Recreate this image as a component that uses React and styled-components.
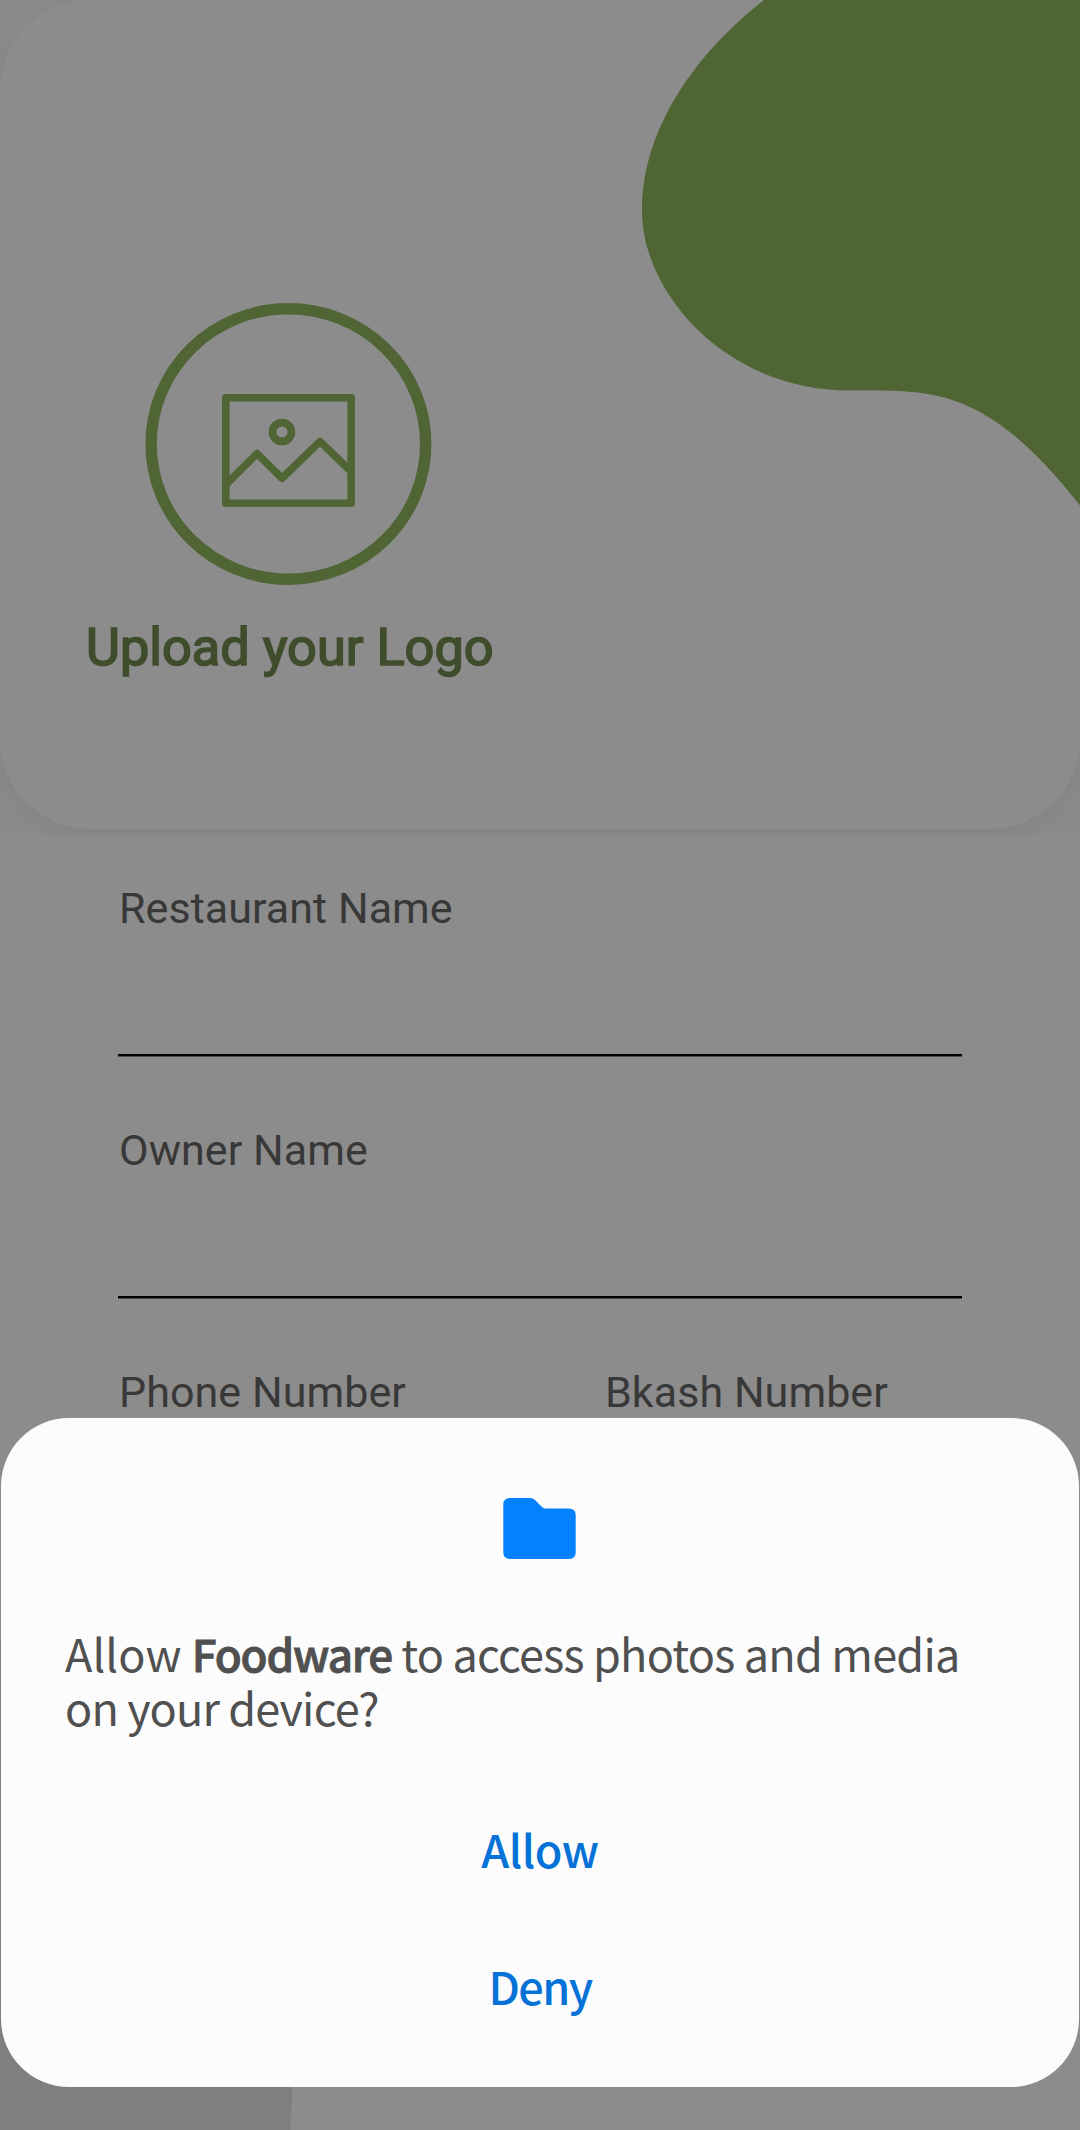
import React from 'react';
import styled, { createGlobalStyle } from 'styled-components';

const GlobalStyle = createGlobalStyle`
  body { margin: 0; background: #8c8c8c; }
  * { box-sizing: border-box; }
`;

const Screen = styled.div`
  position: relative;
  width: 1080px;
  height: 2130px;
  overflow: hidden;
  background: #8c8c8c;
  font-family: Roboto, 'Liberation Sans', sans-serif;
`;

const Header = styled.header`
  height: 835px;
  overflow: hidden;
  background: #8a8a8a;
`;

const HeaderCard = styled.div`
  position: relative;
  display: flex;
  flex-direction: column;
  align-items: flex-start;
  height: 829px;
  padding: 303px 0 0 86px;
  border-radius: 90px;
  background: #8c8c8c;
  box-shadow: 0 6px 18px rgba(0, 0, 0, 0.05);
`;

const Blob = styled.svg`
  position: absolute;
  top: 0;
  right: 0;
`;

const LogoIcon = styled.svg`
  margin-left: 59px;
  display: block;
`;

const UploadLabel = styled.div`
  margin-top: 31px;
  font-size: 52.3px;
  line-height: 62px;
  font-weight: 400;
  -webkit-text-stroke: 1.7px #3f4d2d;
  white-space: nowrap;
  color: #3f4d2d;
`;

const Form = styled.form`
  display: flex;
  flex-direction: column;
  padding: 48px 118px 0;
`;

const FieldRow = styled.div`
  display: grid;
  grid-template-columns: ${(p) => p.$columns};
  height: 242px;
`;

const Field = styled.label`
  display: flex;
  flex-direction: column;
  min-width: 0;
`;

const FieldLabel = styled.span`
  padding-left: 1px;
  font-size: 43px;
  line-height: 50px;
  letter-spacing: 0.06px;
  white-space: nowrap;
  color: #383838;
`;

const FieldInput = styled.input`
  width: 100%;
  height: 123px;
  padding: 0;
  border: 0;
  border-bottom: 2px solid #000;
  border-radius: 0;
  box-shadow: 0 1px 0 #4c4c4c;
  background: transparent;
  outline: none;
  font-size: 43px;
`;

const CornerBlob = styled.svg`
  position: absolute;
  left: 0;
  bottom: 0;
`;

const Dialog = styled.section`
  position: absolute;
  top: 1418px;
  left: 1px;
  right: 1px;
  height: 669px;
  display: flex;
  flex-direction: column;
  align-items: center;
  padding-top: 80px;
  border-radius: 68px;
  background: #fcfcfc;
  font-family: 'Noto Sans CJK SC', 'Noto Sans', sans-serif;
`;

const Message = styled.p`
  align-self: stretch;
  margin: 66px 0 0;
  padding: 0 64px;
  font-size: 45px;
  line-height: 54px;
  white-space: nowrap;
  color: #505050;
`;

const Run = styled.span`
  letter-spacing: ${(p) => p.$spacing || 0}px;
`;

const AppName = styled.strong`
  font-size: 44px;
  line-height: 1;
  font-weight: 500;
  letter-spacing: -1.2px;
  -webkit-text-stroke: 0.9px #505050;
`;

const Actions = styled.div`
  display: flex;
  flex-direction: column;
  align-items: center;
  margin-top: 46px;
`;

const ActionButton = styled.button`
  height: 137px;
  padding: 0 60px;
  border: 0;
  background: none;
  font-family: inherit;
  font-size: 45px;
  line-height: 54px;
  font-weight: 500;
  letter-spacing: ${(p) => p.$spacing || 0}px;
  color: #0472d6;
`;

const fields = [['Restaurant Name'], ['Owner Name'], ['Phone Number', 'Bkash Number']];

export default function App() {
  return (
    <>
      <GlobalStyle />
      <Screen>
        <Header>
          <HeaderCard>
            <Blob width="440" height="510" viewBox="640 0 440 510">
              <path
                d="M764 0C700 50 642 125 642 211C642 292 725 390.500 850 390.500C930 390.500 985 384 1080 505.500V0Z"
                fill="#4f6534"
              />
            </Blob>
            <LogoIcon width="287" height="282" viewBox="145 303 287 282" fill="none" stroke="#4f6534">
              <ellipse cx="288.4" cy="444" rx="137.3" ry="135.3" strokeWidth="11.4" />
              <g strokeWidth="7.6" strokeLinejoin="round">
                <rect x="225.8" y="397.8" width="125.4" height="105.4" />
                <path d="M227 483.5L257 453.6L282 478.2L320 441.4L350 470.5" />
                <circle cx="282" cy="432" r="9.4" strokeWidth="7.8" />
              </g>
            </LogoIcon>
            <UploadLabel>Upload your Logo</UploadLabel>
          </HeaderCard>
        </Header>
        <Form>
          {fields.map((row) => (
            <FieldRow key={row[0]} $columns={row.length > 1 ? '486px 1fr' : '1fr'}>
              {row.map((label) => (
                <Field key={label}>
                  <FieldLabel>{label}</FieldLabel>
                  <FieldInput />
                </Field>
              ))}
            </FieldRow>
          ))}
        </Form>
        <CornerBlob width="294" height="490" viewBox="0 0 294 490">
          <path d="M0 0C150 60 300 260 292.500 447L290.500 490H0Z" fill="#7f7f7f" />
        </CornerBlob>
        <Dialog>
          <svg width="74" height="62" viewBox="503 1498 74 62">
            <path
              d="M510 1498H530Q533 1498 535 1500L542 1507Q543.5 1508.500 546 1508.500H569Q575.700 1508.500 575.700 1515V1552.500Q575.700 1559 569 1559H510Q503.300 1559 503.300 1552.500V1504.500Q503.300 1498 510 1498Z"
              fill="#0381fe"
            />
          </svg>
          <Message>
            <Run $spacing={0.1}>Allow </Run>
            <AppName>Foodware</AppName>
            <Run $spacing={-0.8}> to access photos and media</Run>
            <br />
            <Run $spacing={-0.87}>on your device?</Run>
          </Message>
          <Actions>
            <ActionButton $spacing={-0.4}>Allow</ActionButton>
            <ActionButton $spacing={-1.6}>Deny</ActionButton>
          </Actions>
        </Dialog>
      </Screen>
    </>
  );
}
